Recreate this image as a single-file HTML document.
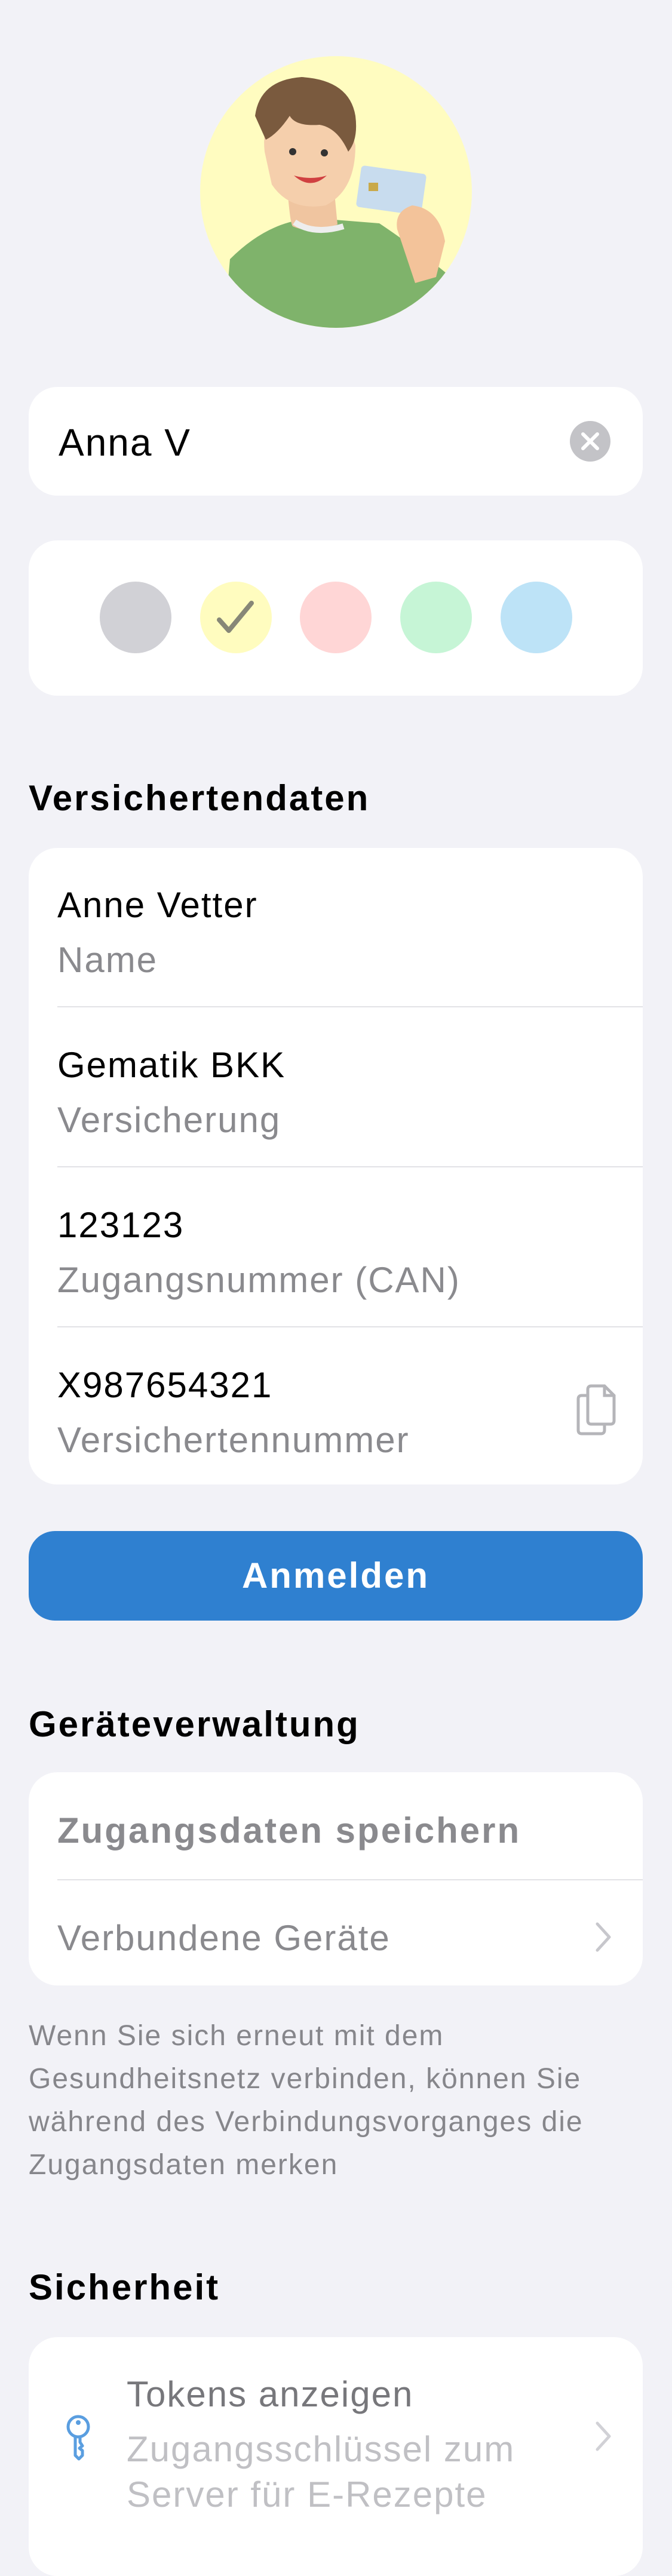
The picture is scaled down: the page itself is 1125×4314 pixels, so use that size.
<!DOCTYPE html>
<html><head><meta charset="utf-8">
<style>
*{margin:0;padding:0;box-sizing:border-box}
html,body{width:1125px;height:4200px;overflow:hidden;background:#f2f2f7;font-family:"Liberation Sans",Arial,sans-serif}
.abs{position:absolute}
.card{position:absolute;left:48px;width:1028px;background:#fff;border-radius:48px;overflow:hidden}
.t{position:absolute;left:48px;font-size:60px;letter-spacing:2px;color:#000;white-space:nowrap;line-height:1}
.s{color:#8a8a8e}
.h{position:absolute;left:48px;font-size:60px;font-weight:bold;letter-spacing:3px;white-space:nowrap;line-height:1}
.sep{position:absolute;left:48px;right:0;height:2px;background:#e2e2e6}
.dot{position:absolute;width:120px;height:120px;border-radius:50%;top:69px}
.foot{position:absolute;left:48px;font-size:48px;letter-spacing:2px;color:#86868b;line-height:72px;white-space:nowrap}
</style></head><body>

<svg class="abs" style="left:335px;top:94px" width="455" height="455" viewBox="0 0 455 455">
<defs><clipPath id="c"><circle cx="227.5" cy="227.5" r="227.5"/></clipPath></defs>
<circle cx="227.5" cy="227.5" r="227.5" fill="#fffcc0"/>
<g clip-path="url(#c)">
<path d="M50 340 Q120 270 200 272 L300 280 Q360 320 420 370 L455 455 L40 455 Z" fill="#7fb36b"/>
<path d="M145 205 Q150 280 155 285 Q190 300 230 282 L225 230 Z" fill="#f0c5a0"/>
<path d="M108 160 Q100 85 165 75 Q245 75 260 150 Q260 225 210 250 Q150 260 120 215 Z" fill="#f5cfac"/>
<path d="M92 100 Q100 40 170 35 Q250 40 260 100 Q265 140 248 160 Q230 120 200 115 Q160 118 150 100 Q130 130 110 140 Z" fill="#7a5a3e"/>
<circle cx="155" cy="160" r="6" fill="#333"/><circle cx="208" cy="162" r="6" fill="#333"/>
<path d="M157 200 Q185 225 212 200 Q185 208 157 200 Z" fill="#d04040"/>
<path d="M158 278 Q190 300 240 285" stroke="#eee" stroke-width="10" fill="none"/>
<rect x="265" y="190" width="110" height="70" rx="6" fill="#c8dcee" transform="rotate(8 320 225)"/>
<rect x="282" y="212" width="16" height="14" fill="#c9a94a"/>
<path d="M355 250 Q400 255 410 310 L395 370 L360 380 L330 290 Q325 260 355 250 Z" fill="#f3c39a"/>
</g></svg>

<div class="card" style="top:648px;height:182px">
  <div class="t" style="font-size:64px;top:61px;left:50px">Anna V</div>
  <svg class="abs" style="left:906px;top:57px" width="68" height="68" viewBox="0 0 68 68"><circle cx="34" cy="34" r="34" fill="#c3c3c7"/><path d="M22 22L46 46M46 22L22 46" stroke="#fff" stroke-width="6" stroke-linecap="round"/></svg>
</div>

<div class="card" style="top:905px;height:260px">
  <div class="dot" style="left:119px;background:#d1d1d6"></div>
  <div class="dot" style="left:287px;background:#fffcbf"><svg width="120" height="120" viewBox="0 0 120 120"><path d="M32 64L48 82L86 36" stroke="#878777" stroke-width="8" fill="none" stroke-linecap="round" stroke-linejoin="round"/></svg></div>
  <div class="dot" style="left:454px;background:#ffd6d6"></div>
  <div class="dot" style="left:622px;background:#c6f5d6"></div>
  <div class="dot" style="left:790px;background:#bde3f7"></div>
</div>

<div class="h" style="top:1307px">Versichertendaten</div>
<div class="card" style="top:1420px;height:1066px">
  <div class="t" style="top:66px">Anne Vetter</div><div class="t s" style="top:158px">Name</div>
  <div class="sep" style="top:265px"></div>
  <div class="t" style="top:334px">Gematik BKK</div><div class="t s" style="top:426px">Versicherung</div>
  <div class="sep" style="top:533px"></div>
  <div class="t" style="top:602px">123123</div><div class="t s" style="top:694px">Zugangsnummer (CAN)</div>
  <div class="sep" style="top:801px"></div>
  <div class="t" style="top:870px">X987654321</div><div class="t s" style="top:962px">Versichertennummer</div>
  <svg class="abs" style="left:912px;top:895px" width="76" height="90" viewBox="0 0 76 90"><path d="M30 6H52L68 22V64Q68 70 62 70H30Q24 70 24 64V12Q24 6 30 6Z" fill="none" stroke="#b5b5b9" stroke-width="5"/><path d="M52 6V22H68" fill="none" stroke="#b5b5b9" stroke-width="5"/><path d="M24 22H14Q8 22 8 28V80Q8 86 14 86H46Q52 86 52 80V70" fill="none" stroke="#b5b5b9" stroke-width="5"/></svg>
</div>

<div class="abs" style="left:48px;top:2564px;width:1028px;height:150px;background:#2f80d0;border-radius:44px;color:#fff;font-weight:bold;font-size:60px;letter-spacing:3px;text-align:center;line-height:150px">Anmelden</div>

<div class="h" style="top:2858px">Geräteverwaltung</div>
<div class="card" style="top:2968px;height:357px">
  <div class="t s" style="top:68px;font-weight:bold;letter-spacing:3px">Zugangsdaten speichern</div>
  <div class="sep" style="top:179px"></div>
  <div class="t s" style="top:248px">Verbundene Geräte</div>
  <svg class="abs" style="left:948px;top:248px" width="30" height="56" viewBox="0 0 30 56"><path d="M4 6L24 28L4 50" stroke="#c7c7cc" stroke-width="5" fill="none" stroke-linecap="round" stroke-linejoin="round"/></svg>
</div>
<div class="foot" style="top:3374px">Wenn Sie sich erneut mit dem<br>Gesundheitsnetz verbinden, können Sie<br>während des Verbindungsvorganges die<br>Zugangsdaten merken</div>

<div class="h" style="top:3801px">Sicherheit</div>
<div class="card" style="top:3914px;height:400px">
  <svg class="abs" style="left:58px;top:128px" width="50" height="80" viewBox="0 0 50 80"><circle cx="25" cy="22" r="17" fill="none" stroke="#5a9ee0" stroke-width="5"/><circle cx="25" cy="15" r="4" fill="#5a9ee0"/><path d="M20 38V70L26 76L32 70V62L27 58L32 54L28 48V38" fill="none" stroke="#5a9ee0" stroke-width="5" stroke-linejoin="round"/></svg>
  <div class="t s" style="top:66px;left:164px;color:#77777b">Tokens anzeigen</div>
  <div class="t" style="top:158px;left:164px;color:#c0c0c4">Zugangsschlüssel zum</div>
  <div class="t" style="top:234px;left:164px;color:#c0c0c4">Server für E-Rezepte</div>
  <svg class="abs" style="left:948px;top:138px" width="30" height="56" viewBox="0 0 30 56"><path d="M4 6L24 28L4 50" stroke="#d1d1d6" stroke-width="5" fill="none" stroke-linecap="round" stroke-linejoin="round"/></svg>
</div>
</body></html>
